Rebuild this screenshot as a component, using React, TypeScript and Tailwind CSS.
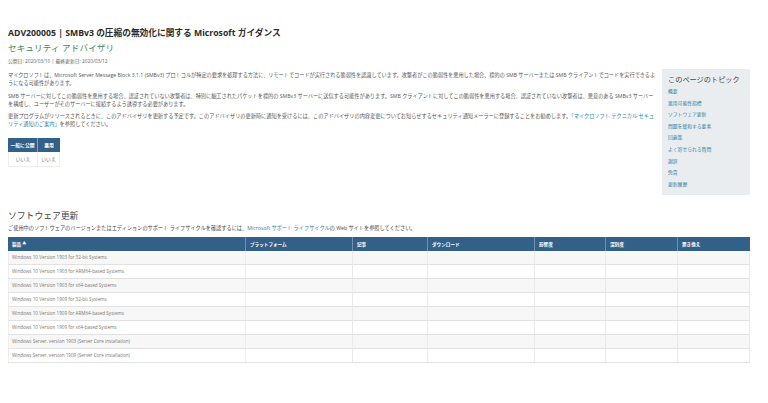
const topics = [
  "概要",
  "悪用可能性指標",
  "ソフトウェア更新",
  "問題を緩和する要素",
  "回避策",
  "よく寄せられる質問",
  "謝辞",
  "免責",
  "更新履歴",
];

const columns = ["製品", "プラットフォーム", "記事", "ダウンロード", "影響度", "深刻度", "置き換え"];

const products = [
  "Windows 10 Version 1903 for 32-bit Systems",
  "Windows 10 Version 1903 for ARM64-based Systems",
  "Windows 10 Version 1903 for x64-based Systems",
  "Windows 10 Version 1909 for 32-bit Systems",
  "Windows 10 Version 1909 for ARM64-based Systems",
  "Windows 10 Version 1909 for x64-based Systems",
  "Windows Server, version 1903 (Server Core installation)",
  "Windows Server, version 1909 (Server Core installation)",
];

const gridCols = "grid grid-cols-[238px_107px_75px_107px_71px_72px_72px]";

export default function App() {
  return (
    <div className="w-[768px] h-[403px] overflow-hidden bg-white px-2 pt-[27px] text-[#555] font-['Open_Sans','Noto_Sans_CJK_JP',sans-serif]">
      {/* Title */}
      <h1 className="text-[8.7px] leading-[12px] font-bold text-[#2b2b2b]">
        ADV200005 | SMBv3 の圧縮の無効化に関する Microsoft ガイダンス
      </h1>
      <h2 className="mt-[2px] text-[8.5px] leading-[14px] tracking-[0.2px] text-[#3d8a5f]">セキュリティ アドバイザリ</h2>
      <p className="mt-[2px] text-[4.8px] leading-[8px] text-[#666]">公開日: 2020/03/10 | 最終更新日: 2020/03/12</p>

      <div className="mt-[1px] flex w-[742px] justify-between">
        <div className="w-[648px] pt-[5px] text-[5.16px] leading-[8px] text-[#555]">
          <p>
            マイクロソフトは、Microsoft Server Message Block 3.1.1 (SMBv3) プロトコルが特定の要求を処理する方法に、リモートでコードが実行される脆弱性を認識しています。攻撃者がこの脆弱性を悪用した場合、標的の SMB サーバーまたは SMB クライアントでコードを実行できるようになる可能性があります。
          </p>
          <p className="mt-[5px] text-[5.18px]">
            SMB サーバーに対してこの脆弱性を悪用する場合、認証されていない攻撃者は、特別に細工されたパケットを標的の SMBv3 サーバーに送信する可能性があります。SMB クライアントに対してこの脆弱性を悪用する場合、認証されていない攻撃者は、悪意のある SMBv3 サーバーを構成し、ユーザーがそのサーバーに接続するよう誘導する必要があります。
          </p>
          <p className="mt-[4px] text-[5.2px]">
            更新プログラムがリリースされるときに、このアドバイザリを更新する予定です。このアドバイザリの更新時に通知を受けるには、このアドバイザリの内容変更についてお知らせするセキュリティ通知メーラーに登録することをお勧めします。<span className="text-[#2f7f9f]">「マイクロソフト テクニカル セキュリティ通知のご案内」</span>を参照してください。
          </p>

          {/* Small status table */}
          <div className="mt-[10px] w-[52px] text-[4.8px] leading-[14px]">
            <div className="grid grid-cols-[30px_22px] bg-[#336088] font-bold text-white">
              <div className="border-r border-white/40 text-center">一般に公開</div>
              <div className="text-center">悪用</div>
            </div>
            <div className="grid grid-cols-[30px_22px] border-b border-[#eee] text-[#777]">
              <div className="border-x border-[#eee] text-center">いいえ</div>
              <div className="border-r border-[#eee] text-center">いいえ</div>
            </div>
          </div>
        </div>

        {/* Topics */}
        <aside className="mt-[3px] h-[126px] w-[88px] bg-[#e9edf0] px-[6px] pt-[4px]">
          <h3 className="mb-[1px] whitespace-nowrap text-[7.2px] leading-[12px] text-[#444]">このページのトピック</h3>
          <ul className="text-[4.8px] leading-[11.6px] text-[#2f7f9f]">
            {topics.map((topic) => (
              <li key={topic}>{topic}</li>
            ))}
          </ul>
        </aside>
      </div>

      {/* Software updates */}
      <h2 className="mt-[15px] text-[8.8px] leading-[13px] text-[#444]">ソフトウェア更新</h2>
      <p className="mt-[1px] text-[5.2px] leading-[8px] text-[#444]">
        ご使用中のソフトウェアのバージョンまたはエディションのサポート ライフサイクルを確認するには、<span className="text-[#2f7f9f]">Microsoft サポート ライフサイクル</span>の Web サイトを参照してください。
      </p>

      <div className="mt-[5px] w-[742px] text-[4.6px]">
        <div className={`${gridCols} h-[14px] items-center bg-[#336088] font-bold text-white`}>
          {columns.map((col, i) => (
            <div key={col} className="flex h-full items-center gap-[1px] border-r border-white/30 pl-[4px] last:border-r-0">
              {col}
              {i === 0 && <span className="text-[4px]">▲</span>}
            </div>
          ))}
        </div>
        {products.map((name, i) => (
          <div
            key={name}
            className={`${gridCols} h-[14px] border-b border-[#e2e2e2] ${i % 2 === 0 ? "bg-[#f7f7f7]" : "bg-white"}`}
          >
            <div className="border-x border-[#eee] pl-[3px] leading-[13px] text-[#777]">{name}</div>
            {columns.slice(1).map((col) => (
              <div key={col} className="border-r border-[#eaeaea]" />
            ))}
          </div>
        ))}
      </div>
    </div>
  );
}
